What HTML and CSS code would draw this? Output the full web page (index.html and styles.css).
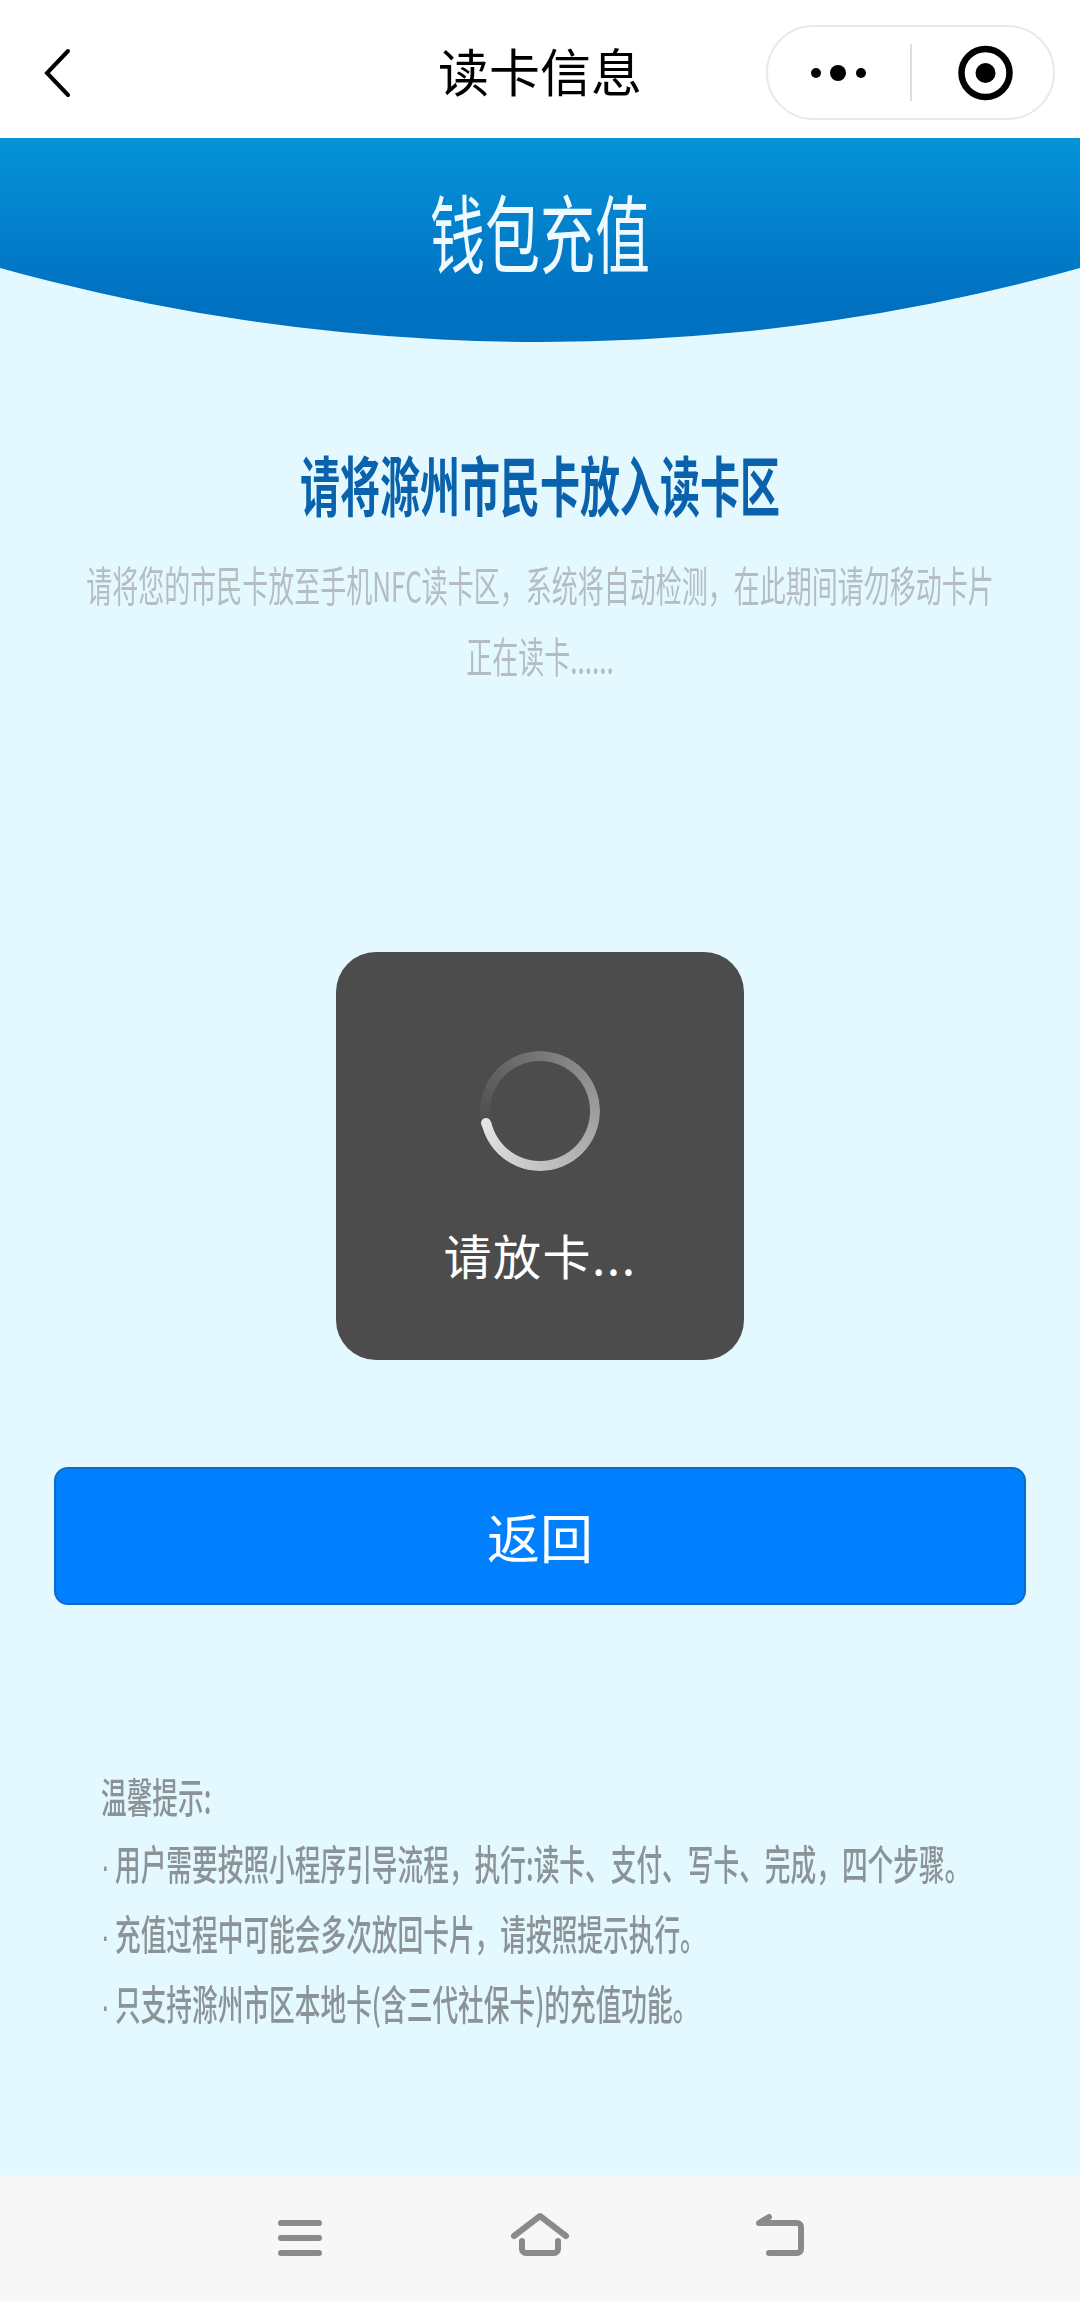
FILE: index.html
```html
<!DOCTYPE html>
<html lang="zh-CN">
<head>
<meta charset="UTF-8">
<meta name="viewport" content="width=device-width, initial-scale=1.0">
<title>读卡信息</title>
<link rel="stylesheet" href="styles.css">
</head>
<body>

<div class="page">
    <div class="nav">
        <svg class="nav-back" width="32" height="52" viewBox="0 0 32 52">
            <path d="M27 4 L6 26 L27 48" fill="none" stroke="#000" stroke-width="4" stroke-linecap="round"/>
        </svg>
        <div class="nav-title">读卡信息</div>
        <div class="capsule">
            <svg class="capsule-more" width="142" height="40" viewBox="0 0 142 40">
                <circle cx="48" cy="20" r="5"/>
                <circle cx="70" cy="20" r="8"/>
                <circle cx="93" cy="20" r="5"/>
            </svg>
            <div class="capsule-line"></div>
            <svg class="capsule-close" width="142" height="60" viewBox="0 0 142 60">
                <circle cx="73.5" cy="30" r="24" fill="none" stroke="#000" stroke-width="6.5"/>
                <circle cx="73.5" cy="30" r="10"/>
            </svg>
        </div>
    </div>

    <div class="banner">
        <div class="banner-title">钱包充值</div>
    </div>

    <div class="content">
        <h1 class="heading">请将滁州市民卡放入读卡区</h1>
        <div class="desc">
            <p>请将您的市民卡放至手机NFC读卡区，系统将自动检测，在此期间请勿移动卡片</p>
            <p>正在读卡......</p>
        </div>

        <div class="toast">
            <div class="spinner"></div>
            <div class="toast-text">请放卡...</div>
        </div>

        <button class="back-btn">返回</button>

        <div class="tips">
            <p>温馨提示:</p>
            <p><span class="dot">·</span>用户需要按照小程序引导流程，执行:读卡、支付、写卡、完成，四个步骤。</p>
            <p><span class="dot">·</span>充值过程中可能会多次放回卡片，请按照提示执行。</p>
            <p><span class="dot">·</span>只支持滁州市区本地卡(含三代社保卡)的充值功能。</p>
        </div>
    </div>

    <div class="bottom-bar">
        <svg width="60" height="60" viewBox="0 0 60 60">
            <path d="M11 15 H49 M11 30 H49 M11 45 H49"/>
        </svg>
        <svg width="60" height="60" viewBox="0 0 60 60">
            <path d="M4 28 L30 8 L56 28 M12 33 V41 a4 4 0 0 0 4 4 H44 a4 4 0 0 0 4 -4 V33"/>
        </svg>
        <svg width="60" height="60" viewBox="0 0 60 60">
            <path d="M19 45 H47 a4 4 0 0 0 4 -4 V19 a4 4 0 0 0 -4 -4 H9 L19 9"/>
        </svg>
    </div>
</div>

</body>
</html>
```

FILE: styles.css
```css
body {
    margin: 0;
    padding: 0;
    font-family: "Noto Sans CJK SC", "Noto Sans", sans-serif;
}
p {
    margin: 0;
}
.page {
    width: 1080px;
    height: 2301px;
    display: flex;
    flex-direction: column;
    background-color: #e4f9ff;
    overflow: hidden;
}

/* top nav */
.nav {
    height: 138px;
    box-sizing: border-box;
    padding-top: 7px;
    display: grid;
    grid-template-columns: 1fr auto 1fr;
    align-items: center;
    background-color: #ffffff;
}
.nav-back {
    margin-left: 41px;
}
.nav-title {
    font-size: 51px;
    line-height: 60px;
    padding-bottom: 5px;
    color: #000000;
}
.capsule {
    justify-self: end;
    margin-right: 25px;
    width: 289px;
    height: 95px;
    box-sizing: border-box;
    border: 2px solid #e9e9e9;
    border-radius: 48px;
    display: flex;
    align-items: center;
}
.capsule-more {
    flex: none;
}
.capsule-line {
    flex: none;
    width: 2px;
    height: 57px;
    background-color: #dedede;
}
.capsule-close {
    flex: none;
}

/* curved banner */
.banner {
    height: 204px;
    padding-top: 42px;
    box-sizing: border-box;
    text-align: center;
    background: linear-gradient(#0593d8, #0070c1 82%);
    clip-path: circle(2007px at 50% -1803px);
}
.banner-title {
    font-size: 55px;
    line-height: 100px;
    color: #eefaff;
    transform: scaleY(1.55);
}

.content {
    flex: 1;
    display: flex;
    flex-direction: column;
    align-items: center;
}
.heading {
    margin: 110px 0 0;
    font-size: 40px;
    line-height: 62px;
    font-weight: 700;
    color: #0a62ad;
    transform: scaleY(1.62);
}
.desc {
    margin-top: 34px;
    text-align: center;
    font-size: 26px;
    line-height: 71px;
    color: #b5bdc1;
}
.desc p {
    transform: scaleY(1.6);
}

/* loading toast */
.toast {
    margin-top: 262px;
    width: 408px;
    height: 408px;
    box-sizing: border-box;
    padding-top: 99px;
    border-radius: 40px;
    background-color: #4c4c4c;
    display: flex;
    flex-direction: column;
    align-items: center;
}
.spinner {
    position: relative;
    width: 120px;
    height: 120px;
}
.spinner::before {
    content: '';
    position: absolute;
    inset: 0;
    border-radius: 50%;
    background: conic-gradient(from 257deg, #4c4c4c, #e4e4e4);
    -webkit-mask: radial-gradient(circle, transparent 49.5px, #000 50.5px);
    mask: radial-gradient(circle, transparent 49.5px, #000 50.5px);
}
.spinner::after {
    content: '';
    position: absolute;
    left: 1.4px;
    top: 67.4px;
    width: 10px;
    height: 10px;
    border-radius: 50%;
    background-color: #e4e4e4;
}
.toast-text {
    margin-top: 53px;
    font-size: 48px;
    line-height: 60px;
    color: #ffffff;
    letter-spacing: 1.5px;
}

.back-btn {
    margin-top: 107px;
    width: 972px;
    height: 138px;
    flex: none;
    border: 2px solid #0a6cc4;
    border-radius: 14px;
    background-color: #0080ff;
    color: #ffffff;
    font-family: inherit;
    font-size: 53px;
    padding: 0;
}

.tips {
    margin-top: 156px;
    align-self: flex-start;
    margin-left: 101px;
    font-size: 25.7px;
    line-height: 68px;
    font-weight: 500;
    color: #8b9397;
}
.tips p {
    transform: scaleY(1.6);
}
.dot {
    display: inline-block;
    width: 14px;
    font-family: "Liberation Sans", sans-serif;
}

/* phone nav */
.bottom-bar {
    height: 126px;
    flex: none;
    display: flex;
    justify-content: center;
    align-items: center;
    gap: 180px;
    background-color: #f7f7f7;
}
.bottom-bar path {
    fill: none;
    stroke: #8a8a8a;
    stroke-width: 6;
    stroke-linecap: round;
    stroke-linejoin: round;
}
```
